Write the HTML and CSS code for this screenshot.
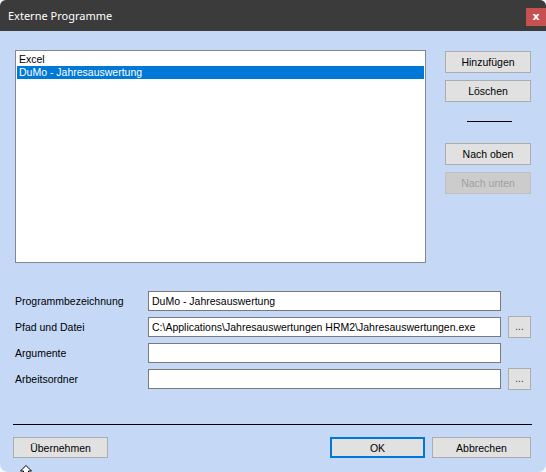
FILE: index.html
```html
<!DOCTYPE html>
<html lang="de">
<head>
<meta charset="utf-8">
<title>Externe Programme</title>
<link rel="stylesheet" href="styles.css">
</head>
<body>
<div class="window">
  <div class="titlebar">
    <span class="title">Externe Programme</span>
    <span class="close">x</span>
  </div>
  <div class="content">
    <div class="top">
      <div class="listbox">
        <div class="item">Excel</div>
        <div class="item selected">DuMo - Jahresauswertung</div>
      </div>
      <div class="side">
        <button class="btn side-btn">Hinzufügen</button>
        <button class="btn side-btn">Löschen</button>
        <div class="divider"></div>
        <button class="btn side-btn">Nach oben</button>
        <button class="btn side-btn disabled">Nach unten</button>
      </div>
    </div>
    <div class="form">
      <div class="row">
        <span class="label">Programmbezeichnung</span>
        <div class="input">DuMo - Jahresauswertung</div>
      </div>
      <div class="row">
        <span class="label">Pfad und Datei</span>
        <div class="input">C:\Applications\Jahresauswertungen HRM2\Jahresauswertungen.exe</div>
        <button class="btn dots">...</button>
      </div>
      <div class="row">
        <span class="label">Argumente</span>
        <div class="input"></div>
      </div>
      <div class="row">
        <span class="label">Arbeitsordner</span>
        <div class="input"></div>
        <button class="btn dots">...</button>
      </div>
    </div>
    <div class="separator"></div>
    <div class="bottom">
      <button class="btn wide">Übernehmen</button>
      <div class="spacer"></div>
      <button class="btn wide ok">OK</button>
      <button class="btn wide cancel">Abbrechen</button>
    </div>
  </div>
  <svg class="cursor" width="12" height="10" viewBox="0 0 12 10">
    <polygon points="6,0.5 11.5,6 8.5,6 8.5,10 3.5,10 3.5,6 0.5,6" fill="#fff" stroke="#000" stroke-width="1"/>
  </svg>
</div>
</body>
</html>
```

FILE: styles.css
```css
html, body {
  margin: 0;
  padding: 0;
  background: #f4f7fb;
}
.window {
  position: relative;
  width: 546px;
  height: 472px;
  background: #c5d9f7;
  border-radius: 6px 6px 8px 8px;
  overflow: hidden;
  font-family: "Liberation Sans", Arial, sans-serif;
  font-size: 10.5px;
  color: #000;
}
.titlebar {
  height: 31px;
  background: #3b3b3b;
  display: flex;
  align-items: flex-start;
}
.title {
  flex: 1;
  padding-left: 8px;
  padding-top: 8px;
  font-family: "Noto Sans", "Open Sans", sans-serif;
  font-size: 11px;
  line-height: 16px;
  color: #ffffff;
}
.close {
  width: 20px;
  height: 18px;
  margin-top: 8px;
  background: #c75050;
  color: #fff;
  font-family: "DejaVu Sans", sans-serif;
  font-weight: bold;
  font-size: 11px;
  line-height: 17px;
  text-align: center;
}
.content {
  display: flex;
  flex-direction: column;
}
.top {
  display: flex;
  margin-top: 19px;
  margin-left: 15px;
}
.listbox {
  box-sizing: border-box;
  width: 411px;
  height: 213px;
  background: #fff;
  border: 1px solid #828790;
  padding: 2px 1px 0 1px;
}
.item {
  height: 13px;
  line-height: 13px;
  padding-left: 2px;
  white-space: nowrap;
}
.item.selected {
  background: #0078d7;
  color: #fff;
}
.side {
  display: flex;
  flex-direction: column;
  margin-left: 19px;
  padding-top: 1px;
  gap: 7px;
}
.btn {
  box-sizing: border-box;
  margin: 0;
  padding: 0;
  background: #e1e1e1;
  border: 1px solid #adadad;
  border-radius: 0;
  font-family: "Liberation Sans", Arial, sans-serif;
  font-size: 10.5px;
  color: #000;
  text-align: center;
}
.side-btn {
  width: 86px;
  height: 22px;
}
.side-btn.disabled {
  background: #cccccc;
  border-color: #bfbfbf;
  color: #a0a0a0;
}
.divider {
  align-self: flex-start;
  width: 45px;
  height: 1px;
  background: #000;
  margin: 12px 0 14px 22px;
}
.form {
  display: flex;
  flex-direction: column;
  margin-top: 25px;
  margin-left: 15px;
}
.row {
  display: flex;
  align-items: center;
  height: 26px;
}
.label {
  width: 133px;
  flex-shrink: 0;
  white-space: nowrap;
}
.input {
  box-sizing: border-box;
  width: 353px;
  height: 20px;
  background: #fff;
  border: 1px solid #7a7a7a;
  padding-left: 3px;
  line-height: 18px;
  white-space: nowrap;
  overflow: hidden;
}
.dots {
  width: 23px;
  height: 22px;
  margin-left: 7px;
  color: #333;
  font-size: 10px;
  line-height: 18px;
}
.separator {
  height: 1px;
  background: #000;
  margin: 32px 14px 0 13px;
}
.bottom {
  display: flex;
  margin: 12px 15px 0 13px;
}
.spacer {
  flex: 1;
}
.wide {
  width: 95px;
  height: 21px;
}
.ok {
  border: 2px solid #0078d7;
}
.cancel {
  width: 99px;
  margin-left: 7px;
}
.cursor {
  position: absolute;
  left: 20px;
  top: 465px;
}
```
